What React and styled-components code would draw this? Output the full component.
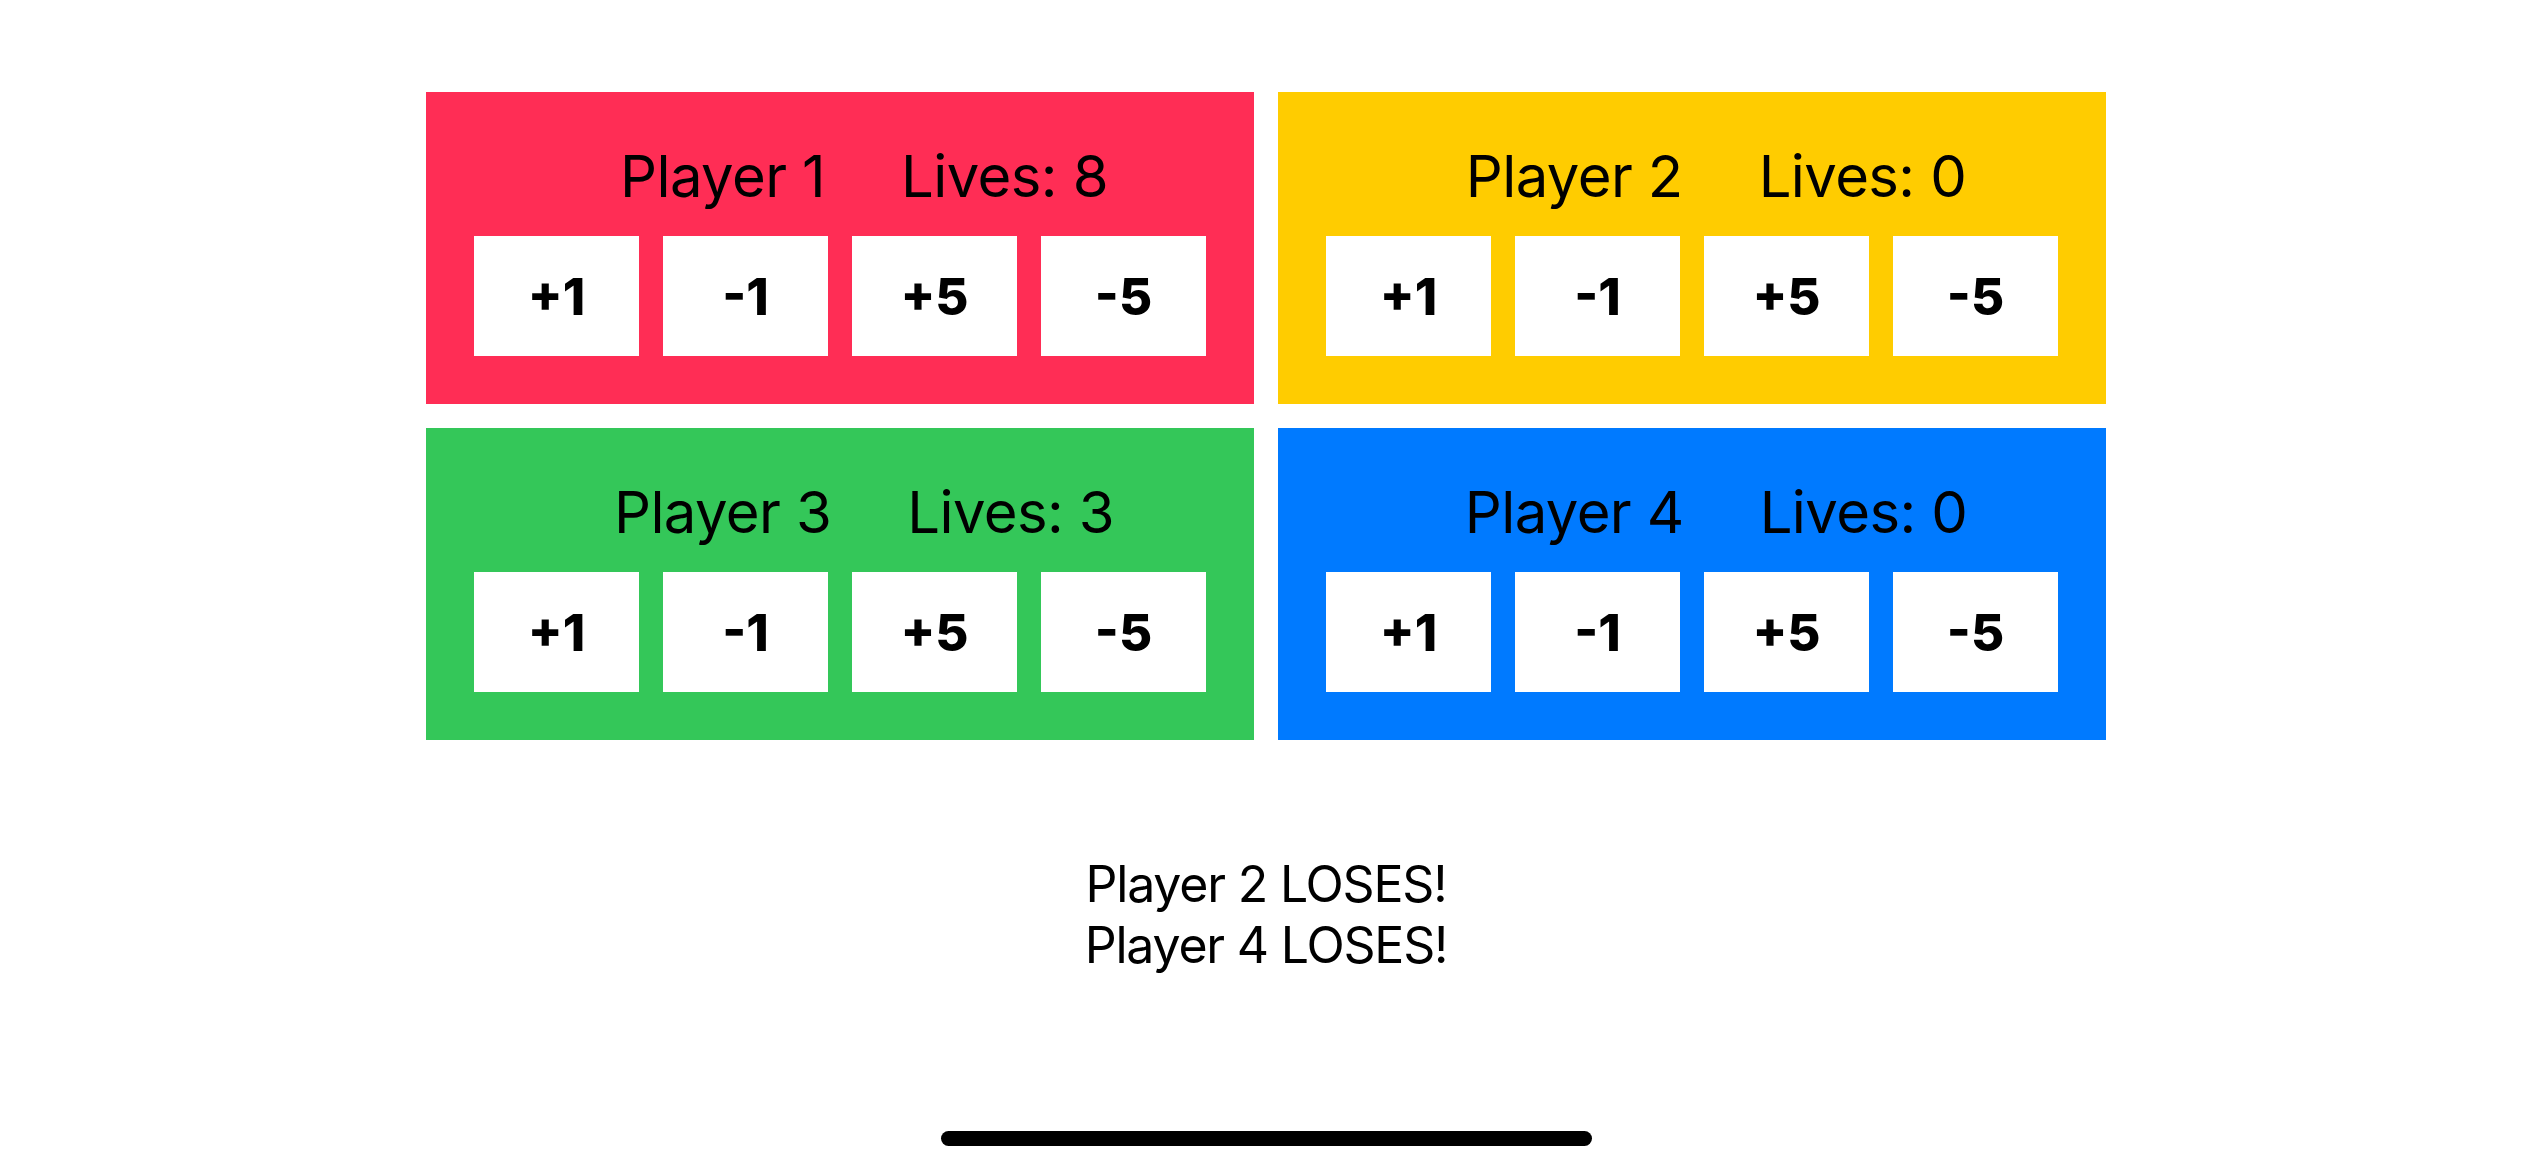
import React, {useState} from 'react';
import styled, {createGlobalStyle} from 'styled-components';

const GlobalStyle = createGlobalStyle`
    html, body {
        margin: 0;
        padding: 0;
        background: #ffffff;
    }
    body {
        font-family: Inter, "Noto Sans", "Liberation Sans", sans-serif;
        color: #000000;
    }
`;

const Screen = styled.div`
    width: 2532px;
    height: 1170px;
    display: flex;
    flex-direction: column;
    align-items: center;
    overflow: hidden;
`;

const Board = styled.div`
    margin-top: 92px;
    display: grid;
    grid-template-columns: repeat(2, 828px);
    grid-auto-rows: 312px;
    gap: 24px;
`;

const Panel = styled.div`
    background: ${p => p.color};
    padding: 48px 48px 0 48px;
    display: flex;
    flex-direction: column;
    box-sizing: border-box;
`;

const Header = styled.div`
    display: flex;
    justify-content: center;
    gap: 76px;
    padding-left: 48px;
    height: 72px;
    margin-bottom: 24px;
    font-size: 58px;
    line-height: 72px;
    letter-spacing: -0.6px;
    white-space: nowrap;
`;

const Buttons = styled.div`
    display: flex;
    gap: 24px;
`;

const Button = styled.button`
    width: 165px;
    height: 120px;
    border: none;
    border-radius: 0;
    background: #ffffff;
    color: #000000;
    font-family: Inter, "Noto Sans", "Liberation Sans", sans-serif;
    font-weight: 800;
    font-size: 51px;
    padding: 0;
    display: flex;
    align-items: center;
    justify-content: center;
    cursor: pointer;
`;

const Results = styled.div`
    margin-top: 114px;
    text-align: center;
    font-size: 50px;
    line-height: 61px;
    letter-spacing: -1.2px;
`;

const HomeBar = styled.div`
    margin-top: auto;
    margin-bottom: 24px;
    width: 651px;
    height: 15px;
    border-radius: 8px;
    background: #000000;
`;

const players = [
    {name: 'Player 1', lives: 8, color: '#ff2d55'},
    {name: 'Player 2', lives: 0, color: '#ffcc00'},
    {name: 'Player 3', lives: 3, color: '#34c759'},
    {name: 'Player 4', lives: 0, color: '#007aff'},
];

const steps = [1, -1, 5, -5];

export default () => {
    const [lives, setLives] = useState(players.map(p => p.lives));

    const change = (i, d) => {
        setLives(l => l.map((v, j) => (j === i ? Math.max(0, v + d) : v)));
    };

    return (
        <Screen>
            <GlobalStyle />
            <Board>
                {players.map((p, i) => (
                    <Panel key={p.name} color={p.color}>
                        <Header>
                            <span>{p.name}</span>
                            <span>Lives: {lives[i]}</span>
                        </Header>
                        <Buttons>
                            {steps.map(s => (
                                <Button key={s} onClick={() => change(i, s)}>
                                    {s > 0 ? `+${s}` : s}
                                </Button>
                            ))}
                        </Buttons>
                    </Panel>
                ))}
            </Board>
            <Results>
                {players.map((p, i) => lives[i] === 0 && (
                    <div key={p.name}>{p.name} LOSES!</div>
                ))}
            </Results>
            <HomeBar />
        </Screen>
    );
};
